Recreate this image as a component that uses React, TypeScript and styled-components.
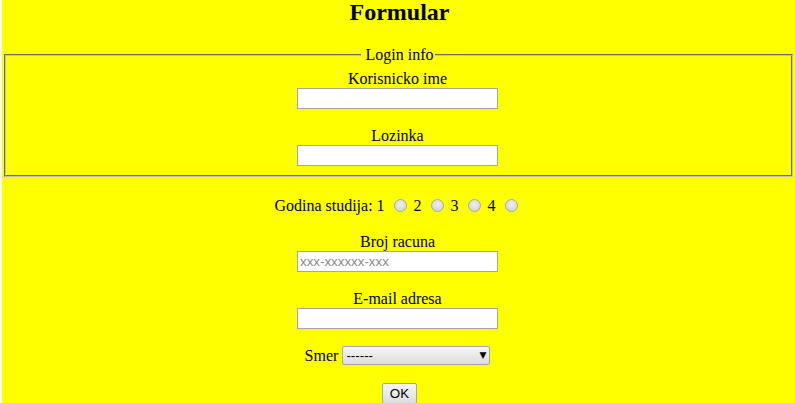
import React from "react";
import styled, { createGlobalStyle } from "styled-components";

const Global = createGlobalStyle`
  html, body { margin: 0; padding: 0; background: #ffffff; }
  body { font-family: "Liberation Serif", "Times New Roman", serif; font-size: 16px; color: #000; }
`;

const Page = styled.div`
  margin-left: 2px;
  padding-right: 2px;
  min-height: 100vh;
  background: #ffff00;
  display: flex;
  flex-direction: column;
  align-items: stretch;
  padding-bottom: 20px;
`;

const Title = styled.h2`
  margin: 0;
  padding-left: 4px;
  font-size: 24px;
  line-height: 25px;
  font-weight: bold;
  text-align: center;
`;

const Fieldset = styled.fieldset`
  margin: 21px 0 0 2px;
  padding: 5.6px 14px 9.5px 12px;
  border: 2px groove rgb(192, 192, 192);
  display: flex;
  flex-direction: column;
  align-items: center;
  min-width: 0;
`;

const Legend = styled.legend`
  margin: 0 auto;
  padding: 0 1px 0 5px;
  line-height: 18px;
`;

const Group = styled.div<{ $gap?: number }>`
  display: flex;
  flex-direction: column;
  align-items: center;
  margin-top: ${(p) => p.$gap ?? 18}px;
`;

const Label = styled.div`
  line-height: 18px;
`;

const TextInput = styled.input`
  box-sizing: border-box;
  width: 201px;
  height: 21px;
  margin: 0;
  padding: 1px 2px;
  border: 1px solid #a6a6a6;
  background: #fff;
  font-family: "Liberation Sans", Arial, sans-serif;
  font-size: 13.33px;
  outline: none;
  &::placeholder { color: #8a8a8a; }
`;

const RadioRow = styled.div`
  margin-top: 19px;
  text-align: center;
  line-height: 18px;
`;

const Radio = styled.input`
  appearance: none;
  -webkit-appearance: none;
  box-sizing: border-box;
  width: 13px;
  height: 13px;
  margin: 3px 3px 0 5px;
  border-radius: 50%;
  border: 1px solid #a8a8a8;
  background: radial-gradient(circle at 50% 40%, #eeeeee 0%, #dcdcdc 60%, #cfcfcf 100%);
  vertical-align: -1px;
`;

const Inline = styled.div`
  margin-top: 17px;
  display: flex;
  justify-content: center;
  align-items: center;
  gap: 4px;
  line-height: 18px;
`;

const SelectWrap = styled.span`
  position: relative;
  display: inline-block;
  width: 148px;
  height: 19px;
`;

const Select = styled.select`
  appearance: none;
  -webkit-appearance: none;
  box-sizing: border-box;
  width: 148px;
  height: 19px;
  margin: 0;
  padding: 0 16px 0 3px;
  border: 1px solid #a6a6a6;
  border-radius: 2px;
  background: linear-gradient(#f7f7f7, #dcdcdc);
  font-family: "Liberation Sans", Arial, sans-serif;
  font-size: 13.33px;
  color: #000;
  outline: none;
`;

const Arrow = styled.span`
  position: absolute;
  right: 4px;
  top: 2px;
  font-size: 9px;
  line-height: 15px;
  font-family: "DejaVu Sans", sans-serif;
  pointer-events: none;
`;

const ButtonRow = styled.div`
  margin-top: 18px;
  padding-left: 4px;
  display: flex;
  justify-content: center;
`;

const Button = styled.button`
  box-sizing: border-box;
  width: 35px;
  height: 21px;
  margin: 0;
  padding: 0;
  border: 1px solid #a6a6a6;
  border-radius: 2px;
  background: linear-gradient(#f7f7f7, #dddddd);
  font-family: "Liberation Sans", Arial, sans-serif;
  font-size: 13.33px;
  color: #000;
`;

export default function App() {
  return (
    <>
      <Global />
      <Page>
        <Title>Formular</Title>
        <Fieldset>
          <Legend>Login info</Legend>
          <Group $gap={0}>
            <Label>Korisnicko ime</Label>
            <TextInput type="text" />
          </Group>
          <Group>
            <Label>Lozinka</Label>
            <TextInput type="password" />
          </Group>
        </Fieldset>
        <RadioRow>
          Godina studija: 1 <Radio type="radio" name="g" /> 2 <Radio type="radio" name="g" /> 3{" "}
          <Radio type="radio" name="g" /> 4 <Radio type="radio" name="g" />
        </RadioRow>
        <Group>
          <Label>Broj racuna</Label>
          <TextInput type="text" placeholder="xxx-xxxxxx-xxx" />
        </Group>
        <Group>
          <Label>E-mail adresa</Label>
          <TextInput type="text" />
        </Group>
        <Inline>
          <span>Smer</span>
          <SelectWrap>
            <Select defaultValue="">
              <option value="">------</option>
            </Select>
            <Arrow>▼</Arrow>
          </SelectWrap>
        </Inline>
        <ButtonRow>
          <Button type="button">OK</Button>
        </ButtonRow>
      </Page>
    </>
  );
}
